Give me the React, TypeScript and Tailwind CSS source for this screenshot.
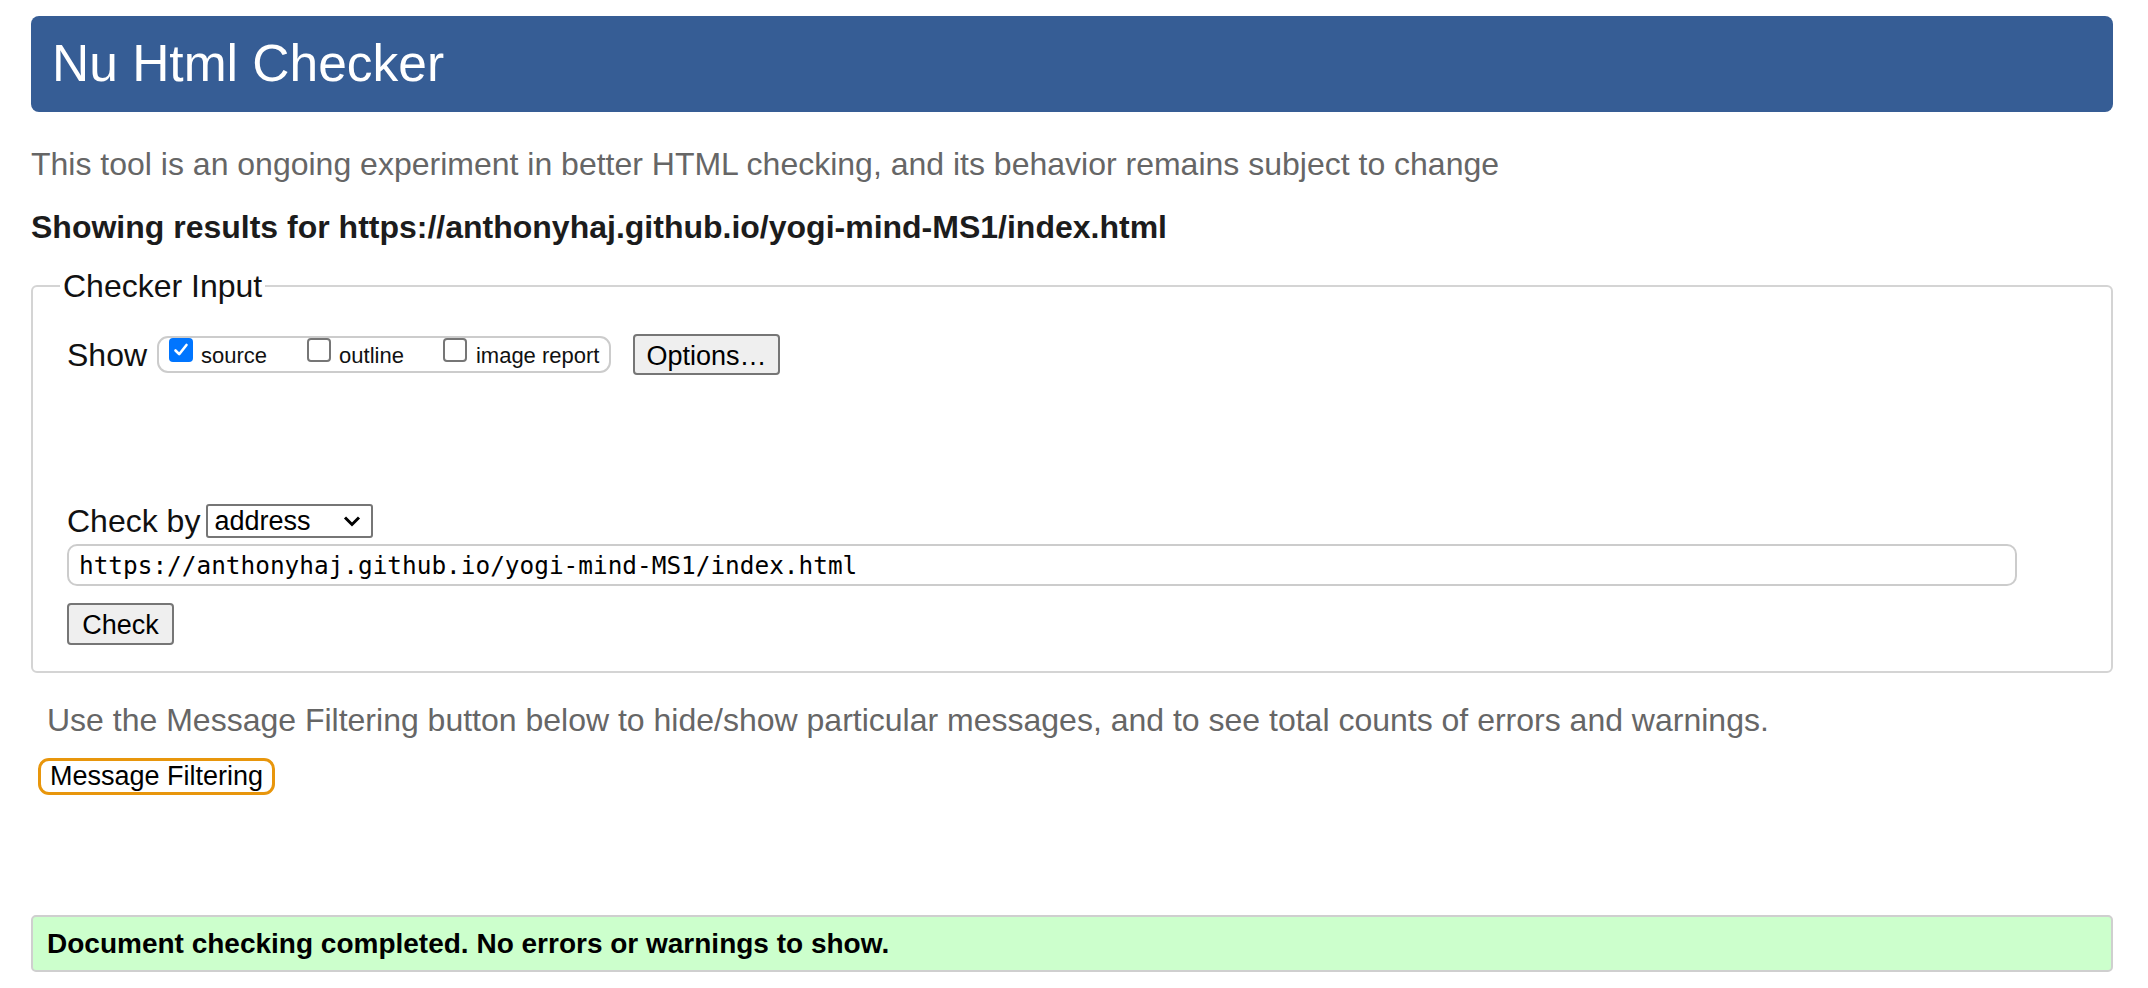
import { useState } from "react";

const SANS = "font-['Liberation_Sans',Arial,sans-serif]";

function Box({ checked, onClick }: { checked: boolean; onClick: () => void }) {
  return (
    <span
      onClick={onClick}
      className={`inline-flex items-center justify-center w-[24px] h-[24px] rounded-[4px] shrink-0 cursor-pointer ${
        checked ? "bg-[#0075ff]" : "bg-white border-2 border-[#767676]"
      }`}
    >
      {checked && (
        <svg width="18" height="18" viewBox="0 0 18 18">
          <path d="M3.5 9.5 L7.2 13.2 L14.5 4" fill="none" stroke="white" strokeWidth="2.6" strokeLinecap="round" strokeLinejoin="round" />
        </svg>
      )}
    </span>
  );
}

export default function App() {
  const [show, setShow] = useState({ source: true, outline: false, image: false });
  const [url, setUrl] = useState("https://anthonyhaj.github.io/yogi-mind-MS1/index.html");

  return (
    <div className={`${SANS} bg-white min-h-[988px] pt-[16px] pl-[31px] pr-[35px] text-[32px]`}>
      <h1 className="h-[96px] flex items-center pl-[21px] bg-[#365d95] rounded-[8px] text-white text-[51.5px] leading-none">
        Nu Html Checker
      </h1>

      <p className="mt-[33px] leading-[38px] text-[#666666]">
        This tool is an ongoing experiment in better HTML checking, and its behavior remains subject to change
      </p>
      <p className="mt-[25px] leading-[38px] font-bold text-[32px] text-[#1c1c1c]">
        Showing results for https://anthonyhaj.github.io/yogi-mind-MS1/index.html
      </p>

      {/* checker input */}
      <fieldset className="mt-[21px] border-2 border-[#d4d4d4] rounded-[6px] pl-[34px] pt-[29px] pb-[26px]">
        <legend className="-ml-[7px] px-[3px] leading-[38px] text-[#111]">Checker Input</legend>

        <div className="flex items-center h-[41px]">
          <span className="text-[#111] mr-[10px]">Show</span>
          <div className="flex items-start h-[37px] border-2 border-[#cccccc] rounded-[11px] pl-[10px] pr-[10px] text-[22px] text-[#111] self-center">
            <div className="flex items-start">
              <Box checked={show.source} onClick={() => setShow({ ...show, source: !show.source })} />
              <span className="ml-[8px] mt-[5px] leading-[26px]">source</span>
            </div>
            <div className="flex items-start ml-[40px]">
              <Box checked={show.outline} onClick={() => setShow({ ...show, outline: !show.outline })} />
              <span className="ml-[8px] mt-[5px] leading-[26px]">outline</span>
            </div>
            <div className="flex items-start ml-[39px]">
              <Box checked={show.image} onClick={() => setShow({ ...show, image: !show.image })} />
              <span className="ml-[9px] mt-[5px] leading-[26px]">image report</span>
            </div>
          </div>
          <button className="ml-[22px] h-[41px] px-[11px] bg-[#efefef] border-2 border-[#767676] rounded-[4px] text-[27px] text-black">
            Options…
          </button>
        </div>

        <div className="mt-[127px] flex items-center h-[38px]">
          <span className="text-[#111]">Check by</span>
          <div className="ml-[6px] h-[34px] w-[167px] flex items-center justify-between border-2 border-[#767676] rounded-[3px] pl-[6px] pr-[9px] text-[27px] text-black">
            <span>address</span>
            <svg width="20" height="14" viewBox="0 0 20 14">
              <path d="M3 3.5 L10 10.5 L17 3.5" fill="none" stroke="black" strokeWidth="3" />
            </svg>
          </div>
        </div>

        <input
          value={url}
          onChange={(e) => setUrl(e.target.value)}
          className="mt-[4px] block w-[1950px] h-[42px] border-2 border-[#cccccc] rounded-[10px] pl-[10px] font-['DejaVu_Sans_Mono',monospace] text-[24.4px] text-black outline-none"
        />

        <button className="mt-[17px] block h-[42px] w-[107px] bg-[#efefef] border-2 border-[#767676] rounded-[4px] text-[27px] text-black">
          Check
        </button>
      </fieldset>

      <p className="mt-[28px] pl-[16px] leading-[38px] text-[#666666]">
        Use the Message Filtering button below to hide/show particular messages, and to see total counts of errors and warnings.
      </p>
      <button className="mt-[19px] ml-[7px] h-[37px] px-[9px] border-[3px] border-[#e8960c] rounded-[11px] bg-white text-[27px] text-black leading-none">
        Message Filtering
      </button>

      <div className="mt-[117px] h-[57px] flex items-center pl-[14px] bg-[#ccffcc] border-2 border-[#cfcfcf] rounded-[5px] font-bold text-[28px] text-black">
        Document checking completed. No errors or warnings to show.
      </div>
    </div>
  );
}
